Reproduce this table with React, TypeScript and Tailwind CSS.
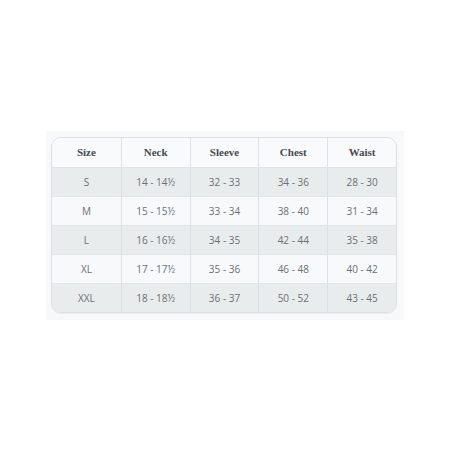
const HEAD = ['Size', 'Neck', 'Sleeve', 'Chest', 'Waist']

const ROWS = [
  ['S', '14 - 14½', '32 - 33', '34 - 36', '28 - 30'],
  ['M', '15 - 15½', '33 - 34', '38 - 40', '31 - 34'],
  ['L', '16 - 16½', '34 - 35', '42 - 44', '35 - 38'],
  ['XL', '17 - 17½', '35 - 36', '46 - 48', '40 - 42'],
  ['XXL', '18 - 18½', '36 - 37', '50 - 52', '43 - 45'],
]

export default function App() {
  return (
    <div className="w-[450px] h-[450px] bg-white pt-[131px] pl-[46px]">
      <div className="w-[358px] h-[189px] bg-[#f7f8f9] pt-[6px] pl-[5px]">
        <div className="w-[346px] rounded-[10px] border border-[#dde1e3] overflow-hidden shadow-[0_1px_1px_rgba(0,0,0,0.06)]">
          <div className="grid grid-cols-5 h-[29px] bg-[#f9fafb]">
            {HEAD.map((h, i) => (
              <div
                key={h}
                className={`flex items-center justify-center text-[11px] font-bold text-[#454b4e] font-['Liberation_Serif',serif] ${i > 0 ? 'border-l border-[#dde1e3]' : ''}`}
              >
                {h}
              </div>
            ))}
          </div>
          {ROWS.map((row, r) => (
            <div
              key={row[0]}
              className={`grid grid-cols-5 h-[29px] border-t border-[#e2e5e7] ${r % 2 === 0 ? 'bg-[#e9eced]' : 'bg-[#f7f9fa]'}`}
            >
              {row.map((c, i) => (
                <div
                  key={i}
                  className={`flex items-center justify-center text-[10px] text-[#6a7074] font-['Open_Sans',sans-serif] ${i > 0 ? 'border-l border-[#dde1e3]' : ''}`}
                >
                  {c}
                </div>
              ))}
            </div>
          ))}
        </div>
      </div>
    </div>
  )
}
